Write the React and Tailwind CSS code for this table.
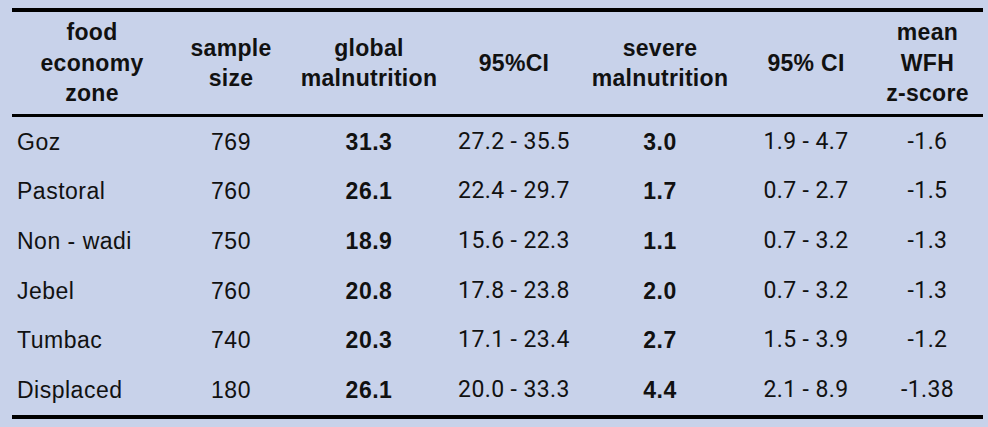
const rows = [
  { zone: 'Goz', n: '769', gam: '31.3', gamCi: '27.2 - 35.5', sam: '3.0', samCi: '1.9 - 4.7', z: '-1.6' },
  { zone: 'Pastoral', n: '760', gam: '26.1', gamCi: '22.4 - 29.7', sam: '1.7', samCi: '0.7 - 2.7', z: '-1.5' },
  { zone: 'Non - wadi', n: '750', gam: '18.9', gamCi: '15.6 - 22.3', sam: '1.1', samCi: '0.7 - 3.2', z: '-1.3' },
  { zone: 'Jebel', n: '760', gam: '20.8', gamCi: '17.8 - 23.8', sam: '2.0', samCi: '0.7 - 3.2', z: '-1.3' },
  { zone: 'Tumbac', n: '740', gam: '20.3', gamCi: '17.1 - 23.4', sam: '2.7', samCi: '1.5 - 3.9', z: '-1.2' },
  { zone: 'Displaced', n: '180', gam: '26.1', gamCi: '20.0 - 33.3', sam: '4.4', samCi: '2.1 - 8.9', z: '-1.38' },
]

const cols = 'grid grid-cols-[160px_118px_158px_132px_160px_132px_1fr]'
const arial = "font-['Liberation_Sans',Arial,sans-serif]"
const roboto = "font-['Roboto',Arial,sans-serif]"

export default function App() {
  return (
    <div className="w-[988px] h-[427px] bg-[#c8d2ea] pl-[12px] pr-[5px] pt-[8px] text-[#111]">
      <div className="border-t-4 border-b-4 border-black">
        <div className={`${cols} ${arial} h-[105px] items-center text-center font-bold text-[23px] leading-[30.5px] tracking-[0.3px] border-b-[3px] border-black`}>
          <div>food<br />economy<br />zone</div>
          <div>sample<br />size</div>
          <div>global<br />malnutrition</div>
          <div>95%CI</div>
          <div>severe<br />malnutrition</div>
          <div>95% CI</div>
          <div>mean<br />WFH<br />z-score</div>
        </div>
        {rows.map((r) => (
          <div key={r.zone} className={`${cols} h-[49.7px] items-center text-center text-[23px] whitespace-nowrap`}>
            <div className={`${arial} text-left pl-[5px] tracking-[0.5px]`}>{r.zone}</div>
            <div className={`${arial} tracking-[0.5px]`}>{r.n}</div>
            <div className={`${arial} font-bold tracking-[0.5px]`}>{r.gam}</div>
            <div className={`${roboto} tracking-[0.4px]`}>{r.gamCi}</div>
            <div className={`${arial} font-bold tracking-[0.5px]`}>{r.sam}</div>
            <div className={`${roboto} tracking-[0.4px]`}>{r.samCi}</div>
            <div className={`${roboto} tracking-[0.4px]`}>{r.z}</div>
          </div>
        ))}
      </div>
    </div>
  )
}
